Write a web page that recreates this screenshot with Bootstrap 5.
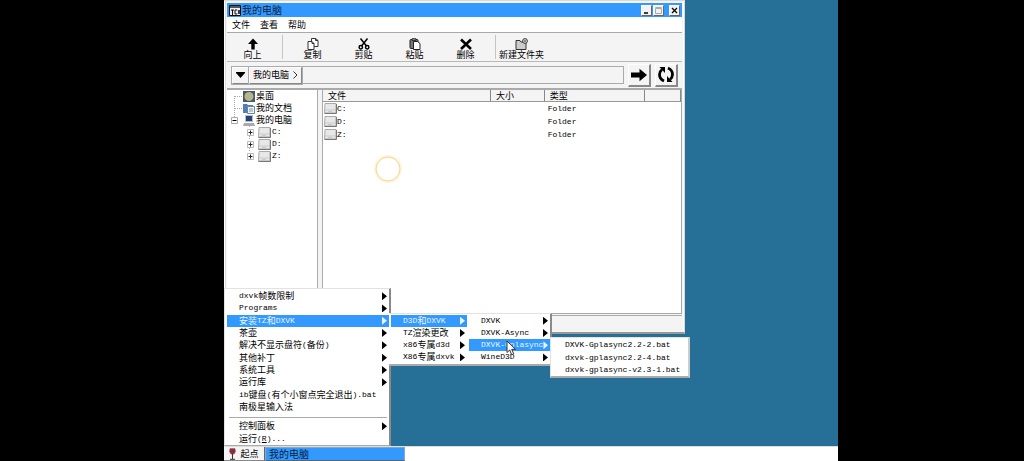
<!DOCTYPE html>
<html lang="zh-CN">
<head>
<meta charset="utf-8">
<meta name="viewport" content="width=device-width, initial-scale=1">
<title>我的电脑</title>
<link href="https://cdn.jsdelivr.net/npm/bootstrap@5.3.0/dist/css/bootstrap.min.css" rel="stylesheet">
<style>
  body { background: #000; color: #000; font: 9px/12px "Noto Sans CJK SC", sans-serif; }
  .lt { font-family: "Liberation Mono", monospace; font-size: 8px; }
  .screen { display: grid; grid-template-columns: 224fr 614fr 186fr; min-height: 100vh; }
  .desktop { grid-column: 2; background: #266f96; }
  a { color: inherit; text-decoration: none; }
  button { font: inherit; color: inherit; padding: 0; border: 0; background: none; }
  svg { display: block; flex: none; }

  .win { width: 75%; height: 334px; background: #f4f4f4; padding: 2px 2px 2px 3px; border: solid #d8d8d8; border-width: 1px 1px 2px 0; box-shadow: inset -1px 0 #fff, inset 1px 0 #fff, inset 2px 0 #ddd; border-bottom-color: #999; }
  .titlebar { background: #3399ff; height: 14px; font-size: 10px; color: #0b2340; padding: 0 2px; gap: 1px; }
  .winbtn { width: 11px; height: 11px; background: #f2f2f2; border: 1px solid #fff; border-right-color: #666; border-bottom-color: #666; }
  .menubar { background: #fff; height: 16px; padding: 0 5px; gap: 10px; border-bottom: 1px solid #aaa; }
  .toolbar { height: 29px; border-bottom: 1px solid #b8b8b8; }
  .tool { width: 51px; line-height: 10px; padding-top: 3px; white-space: nowrap; }
  .vsep { width: 1px; height: 24px; background: #c4c4c4; }
  .address { height: 28px; padding: 0 4px; border-bottom: 2px solid #aaa; }
  .pathbox { height: 18px; border: 1px solid #aaa; }
  .raised { border: 1px solid #fff; border-right-color: #888; border-bottom-color: #888; background: #f4f4f4; }
  .pathbox .raised { height: 17px; padding: 0 3px; box-shadow: 0 0 0 1px #aaa; }
  .go { width: 23px; height: 23px; border-right-width: 2px; border-bottom-width: 2px; }
  .panes { gap: 4px; }
  .tree { flex: none; width: 91px; background: #fff; border: solid #aaa; border-width: 0 1px 1px 0; white-space: nowrap; }
  .tree-row { height: 12px; gap: 1px; }
  .listpane { background: #fff; border: solid #aaa; border-width: 0 1px 1px 1px; }
  .files { width: 100%; table-layout: fixed; border-collapse: separate; border-spacing: 0; }
  .files th { height: 12px; font-weight: 400; padding: 0 5px; background: #f4f4f4; border-right: 1px solid #888; border-bottom: 1px solid #999; line-height: 11px; }
  .files td { height: 13px; padding: 0 1px; line-height: 13px; }
  .files td:nth-child(3) { padding-left: 3px; }
  .status { height: 15px; border: 1px solid #aaa; border-width: 1px 0 0; margin-top: 1px; }

  .popmenu { background: #fff; border: solid #e2e2e2; border-width: 1px 2px 2px 1px; border-right-color: #8a8a8a; border-bottom-color: #aaa; padding: 1px 0 0 2px; margin: 0; list-style: none; }
  .rows { list-style: none; margin: 0; padding: 0; display: flex; flex-direction: column; }
  .rows > li { flex: 1; position: relative; }
  .rows > li > a { display: flex; align-items: center; height: 100%; padding-left: 12px; padding-right: 2px; white-space: nowrap; }
  .rows .picked { background: #3399ff; color: #e8f5ff; }
  .arr { margin-left: auto; width: 5px; height: 8px; background: currentColor; clip-path: polygon(0 0, 100% 50%, 0 100%); }
  .start { left: 0; bottom: 0; width: 167px; z-index: 5; border-bottom-width: 1px; }
  .r10 { height: 123px; } .r4 { height: 49px; } .r3 { height: 37px; } .r2 { height: 25px; }
  .rule { height: 1px; background: #aaa; margin: 4px 2px 2px; }
  .sub { position: absolute; left: 100%; top: -2px; z-index: 6; }
  .sub-a { width: 78px; border-left: 0; border-right: 0; }
  .sub-b { width: 85px; border-left: 0; }
  .sub-c { width: 140px; border-right-color: #ccc; }

  .taskbar { height: 15px; background: #fff; border-top: 1px solid #ddd; }
  .startbtn { width: 41px; background: #f4f4f4; border-right: 1px solid #666; border-bottom: 1px solid #888; }
  .task { width: 140px; background: #3399ff; color: #08203c; font-size: 10px; text-align: left; padding-left: 3px; border: 1px solid #8ab; border-bottom-color: #567; }
  .ring { left: 150px; top: 155px; }
  .pointer { left: 282px; top: 340px; z-index: 9; }
</style>
</head>
<body>
<svg width="0" height="0" class="position-absolute" aria-hidden="true">
  <symbol id="drive" viewBox="0 0 13 11"><path d="M1 .5h11v9.500H.5z" fill="#e8e8e8" stroke="#aaa"/><path d="M.5 10.500h12V1" fill="none" stroke="#777"/><path d="M1 7h11M4 8.500h4" stroke="#bbb" stroke-width=".7"/></symbol>
  <symbol id="plus" viewBox="0 0 7 7"><path d="M.5.5h6v6h-6z" fill="#fff" stroke="#bbb"/><path d="M1.500 3.500h4M3.500 1.500v4" stroke="#222"/></symbol>
</svg>
<div class="screen">
  <main class="desktop d-flex flex-column">
    <div class="flex-grow-1 position-relative">
      <section class="win d-flex flex-column">
        <header class="titlebar d-flex align-items-center">
          <svg width="12" height="12" viewBox="0 0 12 12"><path d="M.5 1.500h11v10H.5z" fill="#eee" stroke="#111"/><path d="M1 3h10" stroke="#555" stroke-width="2"/><path d="M2 6h3M3.500 6v5M8 6H6v4h2M9 6l2 4M11 6 9 10" stroke="#111" fill="none"/></svg>
          <span class="me-auto">我的电脑</span>
          <button class="winbtn" aria-label="最小化"><svg width="9" height="9"><path d="M2 7h4" stroke="#000" stroke-width="1.500"/></svg></button>
          <button class="winbtn" aria-label="最大化"><svg width="9" height="9"><path d="M1.500 2.500h6v5h-6zM1.500 1.500h6" fill="none" stroke="#aaa"/></svg></button>
          <button class="winbtn ms-1" aria-label="关闭"><svg width="9" height="9"><path d="m2 2 5 5M7 2 2 7" stroke="#000" stroke-width="1.200"/></svg></button>
        </header>
        <nav class="menubar d-flex align-items-center"><a href="#">文件</a><a href="#">查看</a><a href="#">帮助</a></nav>
        <div class="toolbar d-flex align-items-center">
          <button class="tool d-flex flex-column align-items-center"><svg width="12" height="12" viewBox="0 0 12 12"><path d="M6 .5 11 6H7.700v5.500H4.300V6H1z"/></svg>向上</button>
          <span class="vsep ms-1"></span>
          <button class="tool d-flex flex-column align-items-center ms-1"><svg width="12" height="12" viewBox="0 0 12 12" fill="#fff" stroke="#333"><path d="M4.500.5h4l2.500 2v6H4.500z"/><path d="M1 3.500h4l2 2v6H1z"/><path d="M8.500.5v2H11M5 3.500v2h2" fill="none"/></svg>复制</button>
          <button class="tool d-flex flex-column align-items-center"><svg width="12" height="12" viewBox="0 0 12 12" fill="none" stroke="#000" stroke-width="1.500"><path d="M2.500.5 8.500 8M9.500.5 3.500 8"/><circle cx="2.800" cy="9.300" r="1.700"/><circle cx="9.200" cy="9.300" r="1.700"/></svg>剪贴</button>
          <button class="tool d-flex flex-column align-items-center"><svg width="12" height="12" viewBox="0 0 12 12" stroke="#222"><rect x="1" y="1.500" width="8" height="9" rx="1" fill="#777"/><path d="M3 .8h4v1.500H3z" fill="#ccc"/><path d="M4.500 3.500h4l2.500 2v6H4.500z" fill="#fff"/></svg>粘贴</button>
          <button class="tool d-flex flex-column align-items-center"><svg width="12" height="12" viewBox="0 0 12 12"><path d="m1 1.500 10 9.500M11 1.500 1 11" stroke="#000" stroke-width="2.600"/></svg>删除</button>
          <span class="vsep ms-1"></span>
          <button class="tool d-flex flex-column align-items-center"><svg width="13" height="12" viewBox="0 0 13 12" stroke="#333"><path d="M1 2.500h4l1 1.500h5v7.500H1z" fill="#ccc"/><circle cx="10" cy="3" r="2.400" fill="#fff"/><path d="M10 1.500v3M8.500 3h3" stroke-width=".7"/></svg>新建文件夹</button>
        </div>
        <div class="address d-flex align-items-center gap-1">
          <div class="pathbox d-flex align-items-center flex-grow-1">
            <button class="raised d-flex align-items-center justify-content-center" aria-label="展开"><svg width="9" height="6"><path d="M-1 0h11L4.500 6z"/></svg></button>
            <button class="raised d-flex align-items-center gap-1">我的电脑<svg width="5" height="8" fill="none" stroke="#333"><path d="M.5.5 4 4 .5 7.500"/></svg></button>
          </div>
          <button class="raised go d-flex align-items-center justify-content-center" aria-label="转到"><svg width="18" height="14" viewBox="0 0 18 14"><path d="M1 4.500h8.500V.8L17 7l-7.500 6.200V9.500H1z"/></svg></button>
          <button class="raised go d-flex align-items-center justify-content-center" aria-label="刷新"><svg width="18" height="17" viewBox="0 0 18 17"><path d="M7 15Q2.500 13 2.500 8.500 2.500 5.500 5 3.500M11 2q4.500 2 4.500 6.500 0 3-2.500 5" fill="none" stroke="#000" stroke-width="2.800"/><path d="M2.500 1H8v6zM15.500 16H10v-6z"/></svg></button>
        </div>
        <div class="panes d-flex flex-grow-1">
          <nav class="tree position-relative">
            <div class="tree-row d-flex align-items-center ps-3"><svg width="12" height="11" viewBox="0 0 12 11"><path d="M0 0h12v11H0z" fill="#455a69"/><circle cx="6" cy="5.500" r="4.500" fill="#b8b58c"/></svg>桌面</div>
            <div class="tree-row d-flex align-items-center ps-3"><svg width="12" height="11" viewBox="0 0 12 11"><path d="M0 1h4l1 1h5v8H0z" fill="#4f82b3"/><path d="M4.500 3.500h7v7h-7z" fill="#edf4fb" stroke="#6788a5"/><path d="M6 6h4M6 8h4" stroke="#89a"/></svg>我的文档</div>
            <div class="tree-row d-flex align-items-center ps-1"><svg width="7" height="7"><path d="M.5.5h6v6h-6z" fill="#fff" stroke="#aaa"/><path d="M1.500 3.500h4" stroke="#000"/></svg><svg width="3" height="1"></svg><svg width="12" height="11" viewBox="0 0 12 11"><path d="M2 0h8v7H2z" fill="#b8bec6"/><path d="M3 1h6v5H3z" fill="#26427b"/><path d="M1 8h10l1 3H0z" fill="#aaa"/></svg>我的电脑</div>
            <div class="tree-row d-flex align-items-center ps-3 lt"><svg class="ms-1" width="7" height="7"><use href="#plus"/></svg><svg width="2" height="1"></svg><svg width="13" height="11"><use href="#drive"/></svg>C:</div>
            <div class="tree-row d-flex align-items-center ps-3 lt"><svg class="ms-1" width="7" height="7"><use href="#plus"/></svg><svg width="2" height="1"></svg><svg width="13" height="11"><use href="#drive"/></svg>D:</div>
            <div class="tree-row d-flex align-items-center ps-3 lt"><svg class="ms-1" width="7" height="7"><use href="#plus"/></svg><svg width="2" height="1"></svg><svg width="13" height="11"><use href="#drive"/></svg>Z:</div>
            <svg class="position-absolute top-0 start-0" width="28" height="66" fill="none" stroke="#aaa" stroke-dasharray="1 1"><path d="M7.500 6v21M8 6.500h7M8 18.500h7M22.500 36v2M22.500 46v4M22.500 58v4"/></svg>
          </nav>
          <div class="listpane flex-grow-1">
            <table class="files">
              <colgroup><col style="width:47%"><col style="width:15%"><col style="width:28%"><col></colgroup>
              <thead><tr><th>文件</th><th>大小</th><th>类型</th><th></th></tr></thead>
              <tbody class="lt">
                <tr><td><span class="d-flex align-items-center"><svg width="13" height="11"><use href="#drive"/></svg>C:</span></td><td></td><td>Folder</td><td></td></tr>
                <tr><td><span class="d-flex align-items-center"><svg width="13" height="11"><use href="#drive"/></svg>D:</span></td><td></td><td>Folder</td><td></td></tr>
                <tr><td><span class="d-flex align-items-center"><svg width="13" height="11"><use href="#drive"/></svg>Z:</span></td><td></td><td>Folder</td><td></td></tr>
              </tbody>
            </table>
          </div>
        </div>
        <footer class="status"></footer>
      </section>

      <svg class="ring position-absolute" width="28" height="28" fill="none"><circle cx="14" cy="14" r="12.500" stroke="#fff4dc" stroke-width="3"/><circle cx="14" cy="14" r="12" stroke="#f5d79c"/></svg>

      <nav class="popmenu start position-absolute">
        <ul class="rows r10">
          <li><a href="#"><span class="lt">dxvk</span>帧数限制<i class="arr"></i></a></li>
          <li><a href="#"><span class="lt">Programs</span><i class="arr"></i></a></li>
          <li><a href="#" class="picked">安装<span class="lt">TZ</span>和<span class="lt">DXVK</span><i class="arr"></i></a>
            <div class="popmenu sub sub-a">
              <ul class="rows r4">
                <li><a href="#" class="picked"><span class="lt">D3D</span>和<span class="lt">DXVK</span><i class="arr"></i></a>
                  <div class="popmenu sub sub-b">
                    <ul class="rows r4">
                      <li><a href="#"><span class="lt">DXVK</span><i class="arr"></i></a></li>
                      <li><a href="#"><span class="lt">DXVK-Async</span><i class="arr"></i></a></li>
                      <li><a href="#" class="picked"><span class="lt">DXVK-Gplasync</span><i class="arr"></i></a>
                        <div class="popmenu sub sub-c">
                          <ul class="rows r3">
                            <li><a href="#" class="lt">DXVK-Gplasync2.2-2.bat</a></li>
                            <li><a href="#" class="lt">dxvk-gplasync2.2-4.bat</a></li>
                            <li><a href="#" class="lt">dxvk-gplasync-v2.3-1.bat</a></li>
                          </ul>
                        </div>
                      </li>
                      <li><a href="#"><span class="lt">WineD3D</span><i class="arr"></i></a></li>
                    </ul>
                  </div>
                </li>
                <li><a href="#"><span class="lt">TZ</span>渲染更改<i class="arr"></i></a></li>
                <li><a href="#"><span class="lt">x86</span>专属<span class="lt">d3d</span><i class="arr"></i></a></li>
                <li><a href="#"><span class="lt">X86</span>专属<span class="lt">dxvk</span><i class="arr"></i></a></li>
              </ul>
            </div>
          </li>
          <li><a href="#">茶壶<i class="arr"></i></a></li>
          <li><a href="#">解决不显示盘符<span class="lt">(</span>备份<span class="lt">)</span><i class="arr"></i></a></li>
          <li><a href="#">其他补丁<i class="arr"></i></a></li>
          <li><a href="#">系统工具<i class="arr"></i></a></li>
          <li><a href="#">运行库<i class="arr"></i></a></li>
          <li><a href="#"><span class="lt">ib</span>键盘<span class="lt">(</span>有个小窗点完全退出<span class="lt">).bat</span></a></li>
          <li><a href="#">南极星输入法</a></li>
        </ul>
        <div class="rule"></div>
        <ul class="rows r2">
          <li><a href="#">控制面板<i class="arr"></i></a></li>
          <li><a href="#">运行<span class="lt">(<u>R</u>)...</span></a></li>
        </ul>
      </nav>
      <svg class="pointer position-absolute" width="12" height="17" viewBox="0 0 12 17"><path d="M1 1v11.500l2.700-2.500 2 4.800 2-.9-2-4.600h3.800z" fill="#fff" stroke="#333"/></svg>
    </div>
    <footer class="taskbar d-flex">
      <button class="startbtn d-flex align-items-center justify-content-center gap-1"><svg width="7" height="12" viewBox="0 0 7 12"><path d="M1 .5h5l.5 3Q6 6 3.500 6.500 1 6 .5 3.500z" fill="#9b2530" stroke="#777" stroke-width=".6"/><path d="M3.500 6v5M1 11.300h5" stroke="#333"/></svg>起点</button>
      <button class="task">我的电脑</button>
    </footer>
  </main>
</div>
<script src="https://cdn.jsdelivr.net/npm/bootstrap@5.3.0/dist/js/bootstrap.bundle.min.js"></script>
</body>
</html>
